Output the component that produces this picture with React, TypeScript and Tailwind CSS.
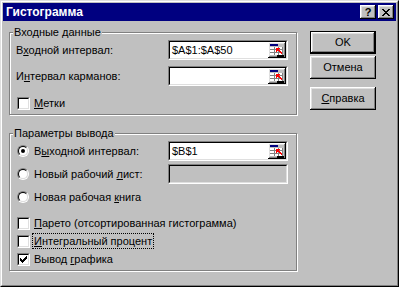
import React from "react";

const sunkenOuter = "border border-t-[#808080] border-l-[#808080] border-r-white border-b-white";
const sunkenInner = "border border-t-black border-l-black border-r-[#dfdfdf] border-b-[#dfdfdf]";
const raised =
  "shadow-[inset_-1px_-1px_0_#000,inset_1px_1px_0_#fff,inset_-2px_-2px_0_#808080,inset_2px_2px_0_#dfdfdf]";
const etched = "border border-[#808080] shadow-[inset_1px_1px_0_#fff,1px_1px_0_#fff]";

function Pixels({ rows, color }: { rows: string[]; color: string }) {
  return (
    <svg width={rows[0].length} height={rows.length} shapeRendering="crispEdges">
      {rows.map((r, y) =>
        r.split("").map((c, x) =>
          c === "#" ? <rect key={x + "-" + y} x={x} y={y} width={1} height={1} fill={color} /> : null
        )
      )}
    </svg>
  );
}

function RefEdit() {
  return (
    <div className={"w-[18px] h-[16px] bg-[#c0c0c0] flex items-center justify-center shrink-0 " + raised}>
      <svg width="14" height="13" viewBox="0 0 14 13" shapeRendering="crispEdges">
        <rect x="0" y="0" width="8" height="2" fill="#000080" />
        <rect x="0" y="3" width="13" height="8" fill="#fff" />
        <rect x="0" y="5" width="13" height="1" fill="#808080" />
        <rect x="0" y="8" width="13" height="1" fill="#808080" />
        <rect x="4" y="3" width="1" height="8" fill="#808080" />
        <rect x="8" y="3" width="1" height="8" fill="#808080" />
        <rect x="12" y="3" width="1" height="8" fill="#808080" />
        <polygon points="6,4 10,4 6,8" fill="#ff0000" />
        <polygon points="8,5 12,9 11,10 7,6" fill="#ff0000" />
        <rect x="7" y="11" width="7" height="2" fill="#000" />
      </svg>
    </div>
  );
}

function Field({ value, disabled, refedit }: { value?: string; disabled?: boolean; refedit?: boolean }) {
  return (
    <div className={"w-[120px] h-[20px] shrink-0 " + sunkenOuter}>
      <div className={"h-full flex items-center " + sunkenInner + (disabled ? " bg-[#c0c0c0]" : " bg-white")}>
        <span className="flex-1 pl-[2px] leading-none">{value}</span>
        {refedit && <RefEdit />}
      </div>
    </div>
  );
}

function Check({ checked }: { checked?: boolean }) {
  return (
    <div className={"w-[13px] h-[13px] shrink-0 " + sunkenOuter}>
      <div className={"w-full h-full bg-white flex items-center justify-center " + sunkenInner}>
        {checked && (
          <Pixels
            color="#000"
            rows={["......#", ".....##", "#...###", "##.###.", "#####..", ".###...", "..#...."]}
          />
        )}
      </div>
    </div>
  );
}

function Radio({ checked }: { checked?: boolean }) {
  return (
    <div className="w-[12px] h-[12px] shrink-0 rounded-full border border-t-[#808080] border-l-[#808080] border-r-white border-b-white">
      <div className="w-full h-full rounded-full bg-white flex items-center justify-center border border-t-black border-l-black border-r-[#dfdfdf] border-b-[#dfdfdf]">
        {checked && <div className="w-[4px] h-[4px] rounded-full bg-black" />}
      </div>
    </div>
  );
}

function Button({ children, def }: { children: React.ReactNode; def?: boolean }) {
  return (
    <div className={"w-[66px] h-[23px] " + (def ? "border border-black" : "")}>
      <div className={"w-full h-full flex items-center justify-center " + raised}>{children}</div>
    </div>
  );
}

export default function App() {
  return (
    <div className="w-[399px] h-[287px] bg-[#c0c0c0] border border-t-[#dfdfdf] border-l-[#dfdfdf] border-r-black border-b-black font-['Liberation_Sans',Arial,sans-serif] text-[11px] text-black">
      <div className="h-full border border-t-white border-l-white border-r-[#808080] border-b-[#808080] p-px flex flex-col">
        {/* title bar */}
        <div className="h-[18px] bg-[#000080] flex items-center pl-[3px] pr-[2px]">
          <span className="flex-1 text-white font-bold text-[12px]">Гистограмма</span>
          <div className={"w-[16px] h-[14px] bg-[#c0c0c0] flex items-center justify-center font-bold text-[11px] leading-none " + raised}>
            ?
          </div>
          <div className={"ml-[2px] w-[16px] h-[14px] bg-[#c0c0c0] flex items-center justify-center " + raised}>
            <Pixels
              color="#000"
              rows={["##....##", ".##..##.", "..####..", "...##...", "..####..", ".##..##.", "##....##"]}
            />
          </div>
        </div>

        <div className="flex items-start">
          <div className="pl-[6px] pt-[11px]">
            {/* input group */}
            <div className={"relative w-[288px] h-[83px] pt-[7px] " + etched}>
              <span className="absolute left-[3px] top-[-7px] px-[1px] bg-[#c0c0c0] leading-[13px]">Входные данные</span>
              <div className="flex items-center h-[20px] pl-[6px]">
                <span className="w-[152px]">
                  В<u>х</u>одной интервал:
                </span>
                <Field value="$A$1:$A$50" refedit />
              </div>
              <div className="flex items-center h-[20px] pl-[6px] mt-[6px]">
                <span className="w-[152px]">
                  И<u>н</u>тервал карманов:
                </span>
                <Field refedit />
              </div>
              <div className="flex items-center h-[13px] pl-[7px] mt-[11px] gap-[4px]">
                <Check />
                <span>
                  <u>М</u>етки
                </span>
              </div>
            </div>

            {/* output group */}
            <div className={"relative w-[288px] h-[138px] mt-[18px] pt-[7px] " + etched}>
              <span className="absolute left-[3px] top-[-7px] px-[1px] bg-[#c0c0c0] leading-[13px]">Параметры вывода</span>
              <div className="flex items-center h-[20px] pl-[7px]">
                <Radio checked />
                <span className="w-[134px] ml-[5px]">
                  В<u>ы</u>ходной интервал:
                </span>
                <Field value="$B$1" refedit />
              </div>
              <div className="flex items-center h-[20px] pl-[7px] mt-[3px]">
                <Radio />
                <span className="w-[134px] ml-[5px]">
                  Новый рабочий <u>л</u>ист:
                </span>
                <Field disabled />
              </div>
              <div className="flex items-center h-[20px] pl-[7px] mt-[3px]">
                <Radio />
                <span className="ml-[5px]">
                  Новая рабочая <u>к</u>нига
                </span>
              </div>
              <div className="mt-[7px] pl-[7px]">
                <div className="flex items-center h-[18px] gap-[4px]">
                  <Check />
                  <span>
                    <u>П</u>арето (отсортированная гистограмма)
                  </span>
                </div>
                <div className="flex items-center h-[18px] gap-[3px]">
                  <Check />
                  <span className="outline-1 outline-dotted outline-black px-px leading-[14px]">
                    <u>И</u>нтегральный процент
                  </span>
                </div>
                <div className="flex items-center h-[18px] gap-[4px]">
                  <Check checked />
                  <span>
                    Вывод <u>г</u>рафика
                  </span>
                </div>
              </div>
            </div>
          </div>

          {/* buttons */}
          <div className="ml-[13px] pt-[10px] flex flex-col">
            <Button def>OK</Button>
            <div className="mt-[2px]">
              <Button>Отмена</Button>
            </div>
            <div className="mt-[8px]">
              <Button>
                <span>
                  <u>С</u>правка
                </span>
              </Button>
            </div>
          </div>
        </div>
      </div>
    </div>
  );
}
